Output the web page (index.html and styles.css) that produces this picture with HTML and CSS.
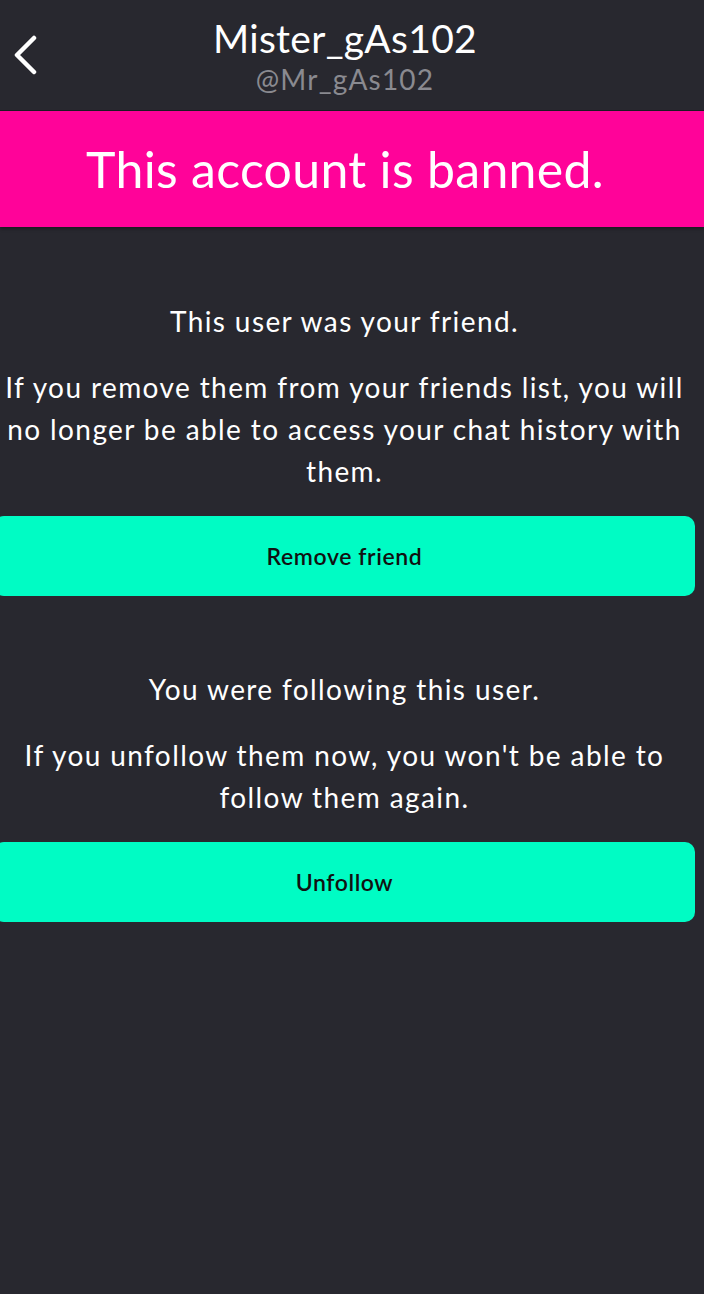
FILE: index.html
```html
<!DOCTYPE html>
<html lang="en">
<head>
    <meta charset="UTF-8">
    <meta name="viewport" content="width=device-width, initial-scale=1.0">
    <title>Mister_gAs102</title>
    <link rel="stylesheet" href="styles.css">
</head>
<body>

    <div class="header">
        <a class="back" href="#">
            <svg width="24" height="40" viewBox="0 0 24 40">
                <path d="M20 3 L3 20 L20 37" fill="none" stroke="#fff" stroke-width="4.5" stroke-linecap="round" stroke-linejoin="round"/>
            </svg>
        </a>
        <div class="title">
            <div class="name">Mister_gAs102</div>
            <div class="handle">@Mr_gAs102</div>
        </div>
    </div>

    <div class="banned">This account is banned.</div>

    <div class="content">
        <div class="section">
            <p class="lead">This user was your friend.</p>
            <p>If you remove them from your friends list, you will no longer be able to access your chat history with them.</p>
            <button class="btn">Remove friend</button>
        </div>

        <div class="section">
            <p class="lead">You were following this user.</p>
            <p>If you unfollow them now, you won't be able to follow them again.</p>
            <button class="btn">Unfollow</button>
        </div>
    </div>

</body>
</html>
```

FILE: styles.css
```css
body {
    margin: 0;
    background-color: #28282f;
    color: #fff;
    font-family: Lato, "Open Sans", sans-serif;
    min-height: 1294px;
}

.header {
    position: relative;
    height: 111px;
    background-color: #28282f;
    border-bottom: 1px solid #1c1c22;
    display: flex;
    justify-content: center;
    padding-right: 14px;
    box-sizing: border-box;
}

.back {
    position: absolute;
    left: 14px;
    top: 35px;
}

.title {
    text-align: center;
    padding-top: 14px;
}

.name {
    font-size: 39px;
    line-height: 48px;
    letter-spacing: 0.3px;
}

.handle {
    font-size: 28px;
    line-height: 34px;
    letter-spacing: 1.2px;
    color: #8a8a90;
}

.banned {
    height: 116px;
    background-color: #ff0399;
    display: flex;
    align-items: center;
    justify-content: center;
    padding-right: 14px;
    font-size: 50px;
    letter-spacing: 0.3px;
    box-shadow: 0 2px 3px rgba(0, 0, 0, 0.35);
}

.content {
    margin-left: -6px;
    width: 701px;
    padding-top: 73px;
}

.section {
    text-align: center;
    margin-bottom: 72px;
}

.section p {
    margin: 0 0 24px;
    font-size: 28px;
    line-height: 42px;
    letter-spacing: 1.4px;
}

.section .lead {
    margin-bottom: 24px;
}

.btn {
    display: block;
    width: 100%;
    height: 80px;
    font-family: inherit;
    font-size: 23px;
    font-weight: 600;
    letter-spacing: 0.6px;
    color: #111;
    background-color: #00fcc4;
    border: none;
    border-radius: 10px;
    cursor: pointer;
}
```
